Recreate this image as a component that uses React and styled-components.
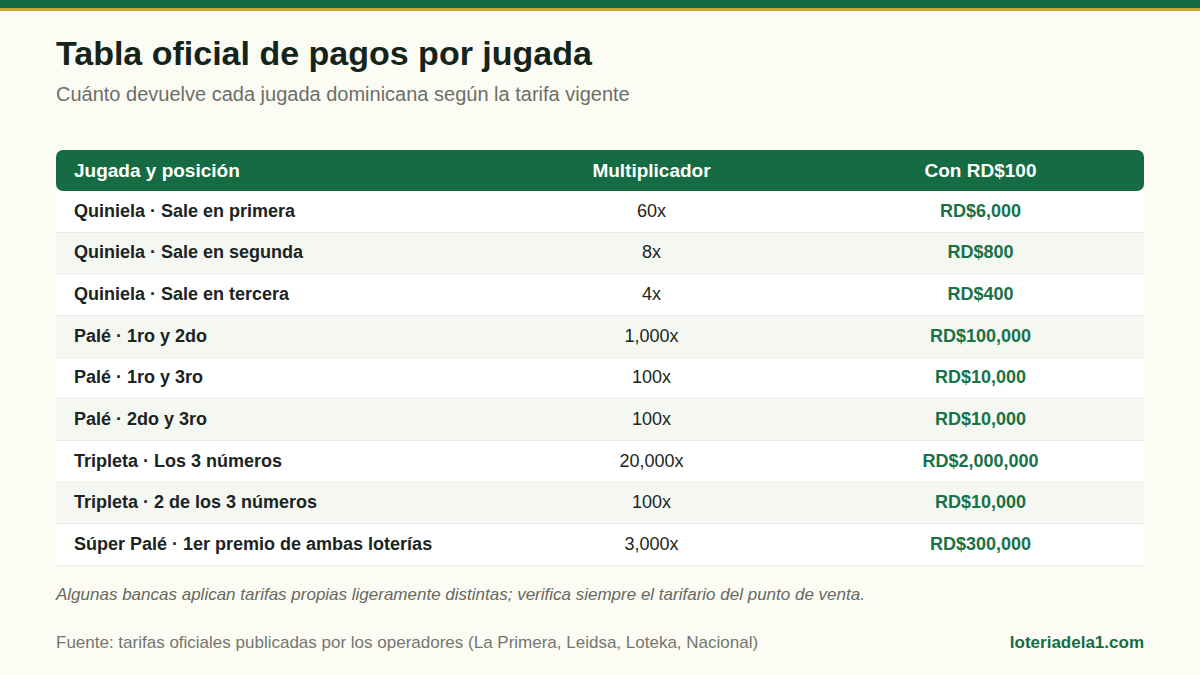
import React from 'react';
import styled, { createGlobalStyle } from 'styled-components';

const GlobalStyle = createGlobalStyle`
  html, body {
    margin: 0;
    padding: 0;
    background: #fcfcf4;
    font-family: "Liberation Sans", Arial, Helvetica, sans-serif;
  }
`;

const Page = styled.div`
  width: 1200px;
  height: 675px;
  background: #fcfcf4;
  overflow: hidden;
`;

const TopBar = styled.div`
  height: 8px;
  background: #166b42;
  border-bottom: 3px solid #cfa734;
`;

const Content = styled.div`
  padding: 22px 56px 0;
`;

const Title = styled.h1`
  margin: 0;
  font-size: 34px;
  line-height: 40px;
  font-weight: 700;
  color: #14241b;
`;

const Subtitle = styled.p`
  margin: 9px 0 0;
  font-size: 20px;
  line-height: 24px;
  color: #6b6f6a;
`;

const Table = styled.div`
  margin-top: 44px;
`;

const Row = styled.div`
  display: grid;
  grid-template-columns: 430px 331px 1fr;
  align-items: center;
  height: ${(p) => (p.head ? '41px' : '41.67px')};
  background: ${(p) => (p.head ? '#156c43' : p.alt ? '#f5f7f3' : '#ffffff')};
  border-radius: ${(p) => (p.head ? '7px' : '0')};
  border-bottom: ${(p) => (p.head ? 'none' : '1px solid #e9ece7')};
  box-sizing: border-box;
`;

const Cell = styled.div`
  font-size: ${(p) => (p.head ? '19px' : '18px')};
  line-height: 21px;
  padding: 0 18px;
  text-align: ${(p) => p.align || 'left'};
  font-weight: ${(p) => (p.bold || p.head ? 700 : 400)};
  color: ${(p) => (p.head ? '#ffffff' : p.color || '#1b241e')};
`;

const Note = styled.p`
  margin: 20px 0 0;
  font-size: 17px;
  line-height: 18px;
  font-style: italic;
  color: #66695f;
`;

const Footer = styled.div`
  margin-top: 29px;
  display: flex;
  justify-content: space-between;
  align-items: center;
  line-height: 19px;
`;

const Source = styled.span`
  font-size: 17px;
  color: #73766f;
`;

const Site = styled.span`
  color: #146c43;
  font-weight: 700;
  font-size: 17px;
`;

const rows = [
  ['Quiniela · Sale en primera', '60x', 'RD$6,000'],
  ['Quiniela · Sale en segunda', '8x', 'RD$800'],
  ['Quiniela · Sale en tercera', '4x', 'RD$400'],
  ['Palé · 1ro y 2do', '1,000x', 'RD$100,000'],
  ['Palé · 1ro y 3ro', '100x', 'RD$10,000'],
  ['Palé · 2do y 3ro', '100x', 'RD$10,000'],
  ['Tripleta · Los 3 números', '20,000x', 'RD$2,000,000'],
  ['Tripleta · 2 de los 3 números', '100x', 'RD$10,000'],
  ['Súper Palé · 1er premio de ambas loterías', '3,000x', 'RD$300,000'],
];

export default function App() {
  return (
    <Page>
      <GlobalStyle />
      <TopBar />
      <Content>
        <Title>Tabla oficial de pagos por jugada</Title>
        <Subtitle>Cuánto devuelve cada jugada dominicana según la tarifa vigente</Subtitle>
        <Table>
          <Row head>
            <Cell head>Jugada y posición</Cell>
            <Cell head align="center">Multiplicador</Cell>
            <Cell head align="center">Con RD$100</Cell>
          </Row>
          {rows.map(([play, mult, pay], i) => (
            <Row key={play} alt={i % 2 === 1}>
              <Cell bold>{play}</Cell>
              <Cell align="center">{mult}</Cell>
              <Cell bold align="center" color="#177245">{pay}</Cell>
            </Row>
          ))}
        </Table>
        <Note>
          Algunas bancas aplican tarifas propias ligeramente distintas; verifica siempre el tarifario del punto de venta.
        </Note>
        <Footer>
          <Source>Fuente: tarifas oficiales publicadas por los operadores (La Primera, Leidsa, Loteka, Nacional)</Source>
          <Site>loteriadela1.com</Site>
        </Footer>
      </Content>
    </Page>
  );
}
